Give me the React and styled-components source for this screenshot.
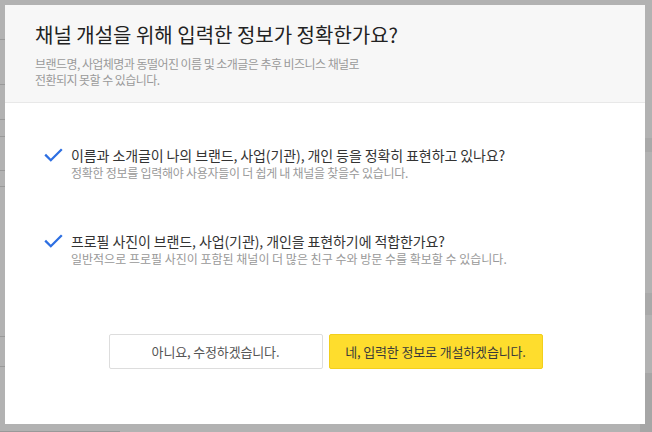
import React from "react";
import styled, { createGlobalStyle } from "styled-components";

const GlobalStyle = createGlobalStyle`
  html, body {
    margin: 0;
    padding: 0;
    background: #ffffff;
  }
  body {
    font-family: "Noto Sans CJK KR", "Noto Sans", sans-serif;
    -webkit-font-smoothing: antialiased;
  }
`;

const Page = styled.div`
  position: relative;
  width: 652px;
  height: 432px;
  overflow: hidden;
  display: flex;
  background: #ffffff;
`;

const SideList = styled.ul`
  list-style: none;
  margin: 0;
  padding: 0;
  width: 120px;
  display: flex;
  flex-direction: column;
`;

const SideRow = styled.li`
  height: ${(p) => p.$h}px;
  border-bottom: 1px solid #dcdcdc;
  box-sizing: border-box;
`;

const MainArea = styled.div`
  flex: 1;
`;

const RightPanel = styled.div`
  width: 12px;
  display: flex;
  flex-direction: column;
`;

const PanelBlock = styled.div`
  height: ${(p) => p.$h}px;
  background: ${(p) => p.$bg || "transparent"};
`;

const Overlay = styled.div`
  position: absolute;
  inset: 0;
  background: rgba(0, 0, 0, 0.3);
  padding: 5px 7px 8px 5px;
  box-sizing: border-box;
  display: flex;
  align-items: flex-start;
`;

const Modal = styled.section`
  width: 640px;
  height: 419px;
  background: #ffffff;
  display: flex;
  flex-direction: column;
`;

const Header = styled.header`
  background: #f7f7f7;
  border-bottom: 1px solid #e8e8e8;
  padding: 17px 30px 14px;
`;

const Title = styled.h2`
  margin: 0;
  font-size: 20px;
  line-height: 26px;
  font-weight: 400;
  color: #222;
`;

const SubTitle = styled.p`
  margin: 8px 0 0;
  font-size: 12px;
  line-height: 16px;
  color: #9a9a9a;
  letter-spacing: -0.55px;
`;

const Body = styled.div`
  flex: 1;
  display: flex;
  flex-direction: column;
  padding: 43px 39px 55px;
`;

const CheckList = styled.ul`
  list-style: none;
  margin: 0;
  padding: 0;
  display: flex;
  flex-direction: column;
  gap: 52px;
`;

const CheckItem = styled.li`
  display: flex;
  gap: 8px;
  align-items: flex-start;
`;

const CheckMark = styled.svg`
  flex: none;
  margin-top: 2px;
`;

const ItemText = styled.div`
  display: flex;
  flex-direction: column;
`;

const ItemMain = styled.span`
  font-size: 14px;
  line-height: 18px;
  color: #333;
  letter-spacing: -0.1px;
`;

const ItemSub = styled.span`
  font-size: 12px;
  line-height: 15px;
  padding-top: 1px;
  color: #999;
  letter-spacing: ${(p) => p.$ls}px;
`;

const ButtonRow = styled.div`
  margin-top: auto;
  display: flex;
  justify-content: center;
  gap: 6px;
  padding-left: 1px;
`;

const Button = styled.button`
  width: 214px;
  height: 35px;
  border-radius: 2px;
  box-sizing: border-box;
  font-family: inherit;
  font-size: 13px;
  letter-spacing: -0.15px;
  cursor: pointer;
  border: 1px solid ${(p) => (p.$primary ? "#f2cf1c" : "#dddddd")};
  background: ${(p) => (p.$primary ? "#fedd2d" : "#ffffff")};
  color: ${(p) => (p.$primary ? "#3a3a3a" : "#555555")};
`;

const Check = () => (
  <CheckMark width="19" height="14" viewBox="0 0 19 14">
    <path
      d="M1.2 6.6 L6.8 12.2 L17.8 1.2"
      fill="none"
      stroke="#2d6fe2"
      strokeWidth="2.3"
    />
  </CheckMark>
);

const items = [
  {
    main: "이름과 소개글이 나의 브랜드, 사업(기관), 개인 등을 정확히 표현하고 있나요?",
    sub: "정확한 정보를 입력해야 사용자들이 더 쉽게 내 채널을 찾을수 있습니다.",
    ls: -0.27,
  },
  {
    main: "프로필 사진이 브랜드, 사업(기관), 개인을 표현하기에 적합한가요?",
    sub: "일반적으로 프로필 사진이 포함된 채널이 더 많은 친구 수와 방문 수를 확보할 수 있습니다.",
    ls: 0,
  },
];

const sideRows = [40, 45, 35, 17, 34, 16, 150, 30, 65];

export default function App() {
  return (
    <>
      <GlobalStyle />
      <Page>
        <SideList>
          {sideRows.map((h, i) => (
            <SideRow key={i} $h={h} />
          ))}
        </SideList>
        <MainArea />
        <RightPanel>
          <PanelBlock $h={138} />
          <PanelBlock $h={14} $bg="#f2f2f2" />
          <PanelBlock $h={141} />
          <PanelBlock $h={22} $bg="#f2f2f2" />
          <PanelBlock $h={58} />
          <PanelBlock $h={59} $bg="#eeeeee" />
        </RightPanel>

        <Overlay>
          <Modal role="dialog" aria-modal="true">
            <Header>
              <Title>채널 개설을 위해 입력한 정보가 정확한가요?</Title>
              <SubTitle>
                브랜드명, 사업체명과 동떨어진 이름 및 소개글은 추후 비즈니스 채널로
                <br />
                전환되지 못할 수 있습니다.
              </SubTitle>
            </Header>
            <Body>
              <CheckList>
                {items.map((item) => (
                  <CheckItem key={item.main}>
                    <Check />
                    <ItemText>
                      <ItemMain>{item.main}</ItemMain>
                      <ItemSub $ls={item.ls}>{item.sub}</ItemSub>
                    </ItemText>
                  </CheckItem>
                ))}
              </CheckList>
              <ButtonRow>
                <Button>아니요, 수정하겠습니다.</Button>
                <Button $primary>네, 입력한 정보로 개설하겠습니다.</Button>
              </ButtonRow>
            </Body>
          </Modal>
        </Overlay>
      </Page>
    </>
  );
}
